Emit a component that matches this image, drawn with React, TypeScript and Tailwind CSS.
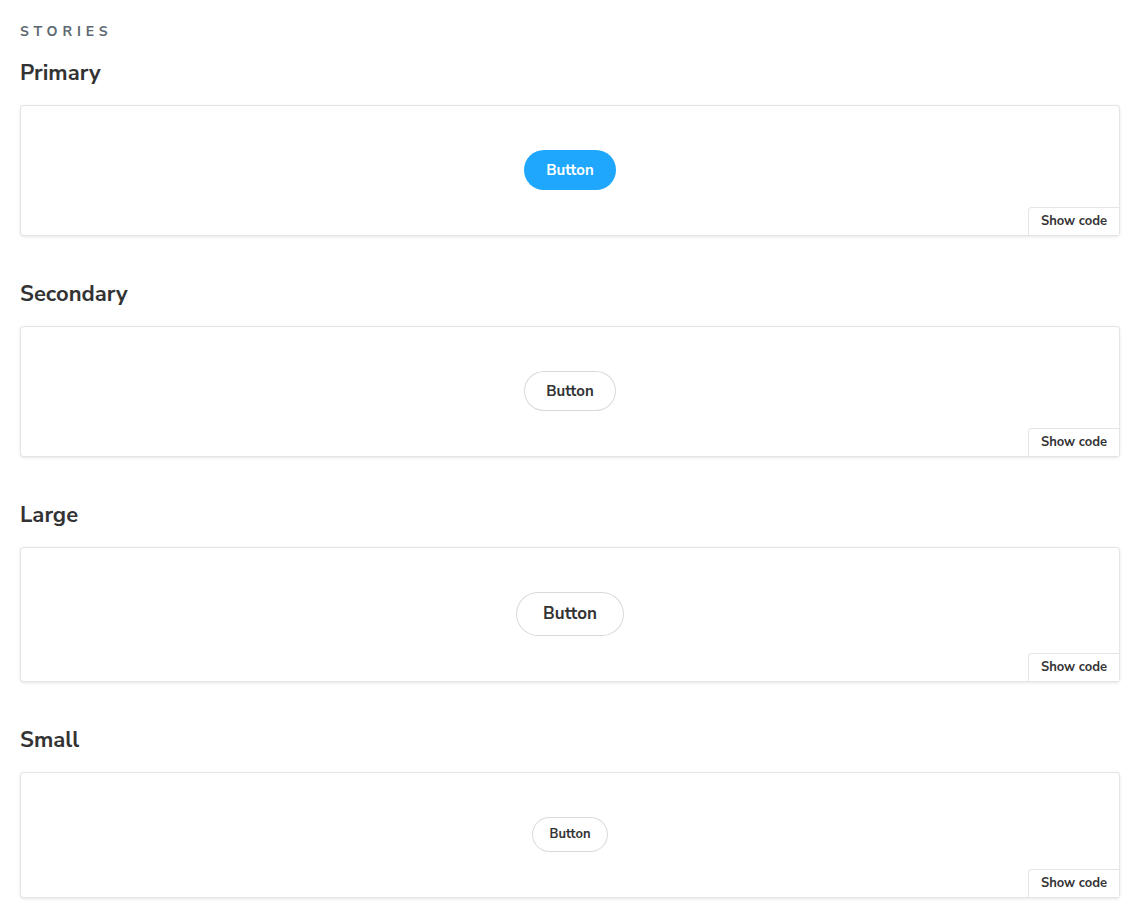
import React from "react";

const font = { fontFamily: '"Nunito Sans", Lato, "Noto Sans", sans-serif' };

type Kind = "primary" | "secondary" | "large" | "small";

function DemoButton({ kind }: { kind: Kind }) {
  if (kind === "primary")
    return (
      <button className="h-[40px] w-[92px] rounded-full bg-[#1ea7fd] text-[15px] font-bold text-white">
        Button
      </button>
    );
  if (kind === "secondary")
    return (
      <button className="h-[40px] w-[92px] rounded-full bg-white text-[15px] font-bold text-[#333] shadow-[inset_0_0_0_1px_rgba(0,0,0,0.15)]">
        Button
      </button>
    );
  if (kind === "large")
    return (
      <button className="h-[44px] w-[108px] rounded-full bg-white text-[17px] font-bold text-[#333] shadow-[inset_0_0_0_1px_rgba(0,0,0,0.15)]">
        Button
      </button>
    );
  return (
    <button className="h-[35px] w-[76px] rounded-full bg-white text-[13px] font-bold text-[#333] shadow-[inset_0_0_0_1px_rgba(0,0,0,0.15)]">
      Button
    </button>
  );
}

function Story({ title, kind, first }: { title: string; kind: Kind; first?: boolean }) {
  return (
    <section className={first ? "" : "mt-[42px]"}>
      <h3 className="text-[22px] font-bold leading-[32px] text-[#333] mb-[16px]">{title}</h3>
      <div className="relative rounded-[4px] border border-[rgba(0,0,0,0.1)] bg-white shadow-[0_1px_3px_0_rgba(0,0,0,0.1)]">
        <div className="flex items-center justify-center pt-[44px] pb-[45px]">
          <DemoButton kind={kind} />
        </div>
        <button className="absolute bottom-0 right-0 h-[28px] w-[91px] rounded-tl-[4px] border-l border-t border-[rgba(0,0,0,0.1)] bg-white text-[13px] font-bold text-[#333]">
          Show code
        </button>
      </div>
    </section>
  );
}

export default function App() {
  return (
    <div className="min-h-[920px] bg-white pl-[20px] pr-[15px] pt-[23px]" style={font}>
      <div className="text-[14px] font-bold uppercase tracking-[0.35em] leading-[18px] text-[#5c6870] mb-[16px]">
        Stories
      </div>
      <Story title="Primary" kind="primary" first />
      <Story title="Secondary" kind="secondary" />
      <Story title="Large" kind="large" />
      <Story title="Small" kind="small" />
    </div>
  );
}
